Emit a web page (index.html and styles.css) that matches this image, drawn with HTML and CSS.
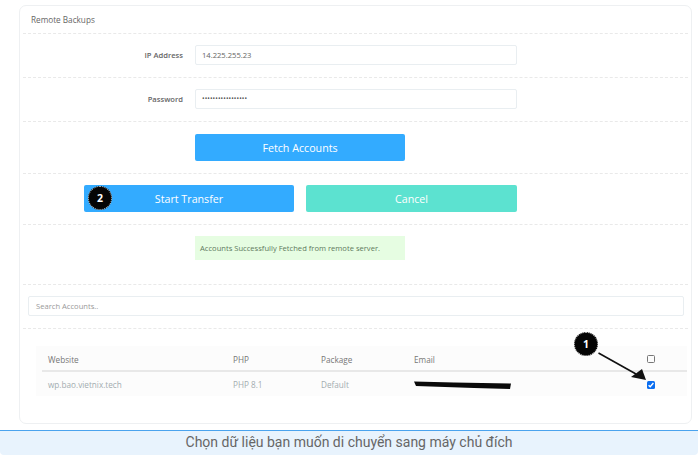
FILE: index.html
```html
<!DOCTYPE html>
<html lang="en">
<head>
  <meta charset="UTF-8" />
  <meta name="viewport" content="width=device-width, initial-scale=1" />
  <title>Remote Backups</title>
  <link rel="stylesheet" href="styles.css">
</head>
<body>
  <div class="card">
    <div class="row title-row">Remote Backups</div>

    <div class="row field-row">
      <label class="field-label">IP Address</label>
      <div class="field-box">14.225.255.23</div>
    </div>

    <div class="row field-row">
      <label class="field-label">Password</label>
      <div class="field-box dots">•••••••••••••••••</div>
    </div>

    <div class="row fetch-row">
      <button class="btn btn-blue btn-half">Fetch Accounts</button>
    </div>

    <div class="row action-row">
      <button class="btn btn-blue btn-half">Start Transfer</button>
      <button class="btn btn-teal btn-cancel">Cancel</button>
      <span class="badge badge-two">2</span>
    </div>

    <div class="row message-row">
      <div class="message">Accounts Successfully Fetched from remote server.</div>
    </div>

    <div class="row search-row">
      <div class="search-box">Search Accounts..</div>
    </div>

    <div class="table-wrap">
      <div class="table-row table-head">
        <span>Website</span>
        <span>PHP</span>
        <span>Package</span>
        <span>Email</span>
        <span class="check"></span>
      </div>
      <div class="table-row table-body">
        <span>wp.bao.vietnix.tech</span>
        <span>PHP 8.1</span>
        <span>Default</span>
        <span class="email-cell">
          <svg class="scribble" width="100" height="10" viewBox="0 0 100 10">
            <path d="M0 0.5 L40 1.5 L97 2.5 L96 8 L60 7 L2 5 Z" fill="#0a0a0a" />
          </svg>
        </span>
        <span class="check checked">
          <svg width="8" height="8" viewBox="0 0 8 8">
            <path d="M1.6 4.2 L3.2 5.8 L6.4 2" fill="none" stroke="#fff" stroke-width="1.4" />
          </svg>
        </span>
      </div>
    </div>

    <span class="badge badge-one">1</span>
    <svg class="arrow" width="50" height="32" viewBox="0 0 50 32">
      <line x1="0.5" y1="3" x2="38" y2="24" stroke="#111" stroke-width="1.6" />
      <path d="M48 30 L33 27 L44 19 Z" fill="#111" />
    </svg>
  </div>

  <div class="caption">Chọn dữ liệu bạn muốn di chuyển sang máy chủ đích</div>
</body>
</html>
```

FILE: styles.css
```css
* {
  box-sizing: border-box;
}

body {
  margin: 0;
  background: #ffffff;
  font-family: 'Open Sans', sans-serif;
  color: #666;
}

.card {
  position: relative;
  width: 673px;
  height: 419px;
  margin: 5px 0 6px 19px;
  border: 1px solid #eef0f2;
  border-radius: 7px;
  padding: 0 3px;
}

.row {
  border-bottom: 1px dashed #e9e9e9;
}

.title-row {
  height: 28px;
  padding: 8px 8px 0;
  font-size: 8.2px;
  color: #666;
}

.field-row {
  display: flex;
  align-items: center;
  height: 44px;
  padding-bottom: 2px;
}

.field-label {
  width: 160px;
  margin-right: 12px;
  text-align: right;
  font-size: 7.6px;
  font-weight: 600;
  color: #666;
}

.field-box {
  width: 322px;
  height: 20px;
  padding: 0 6px;
  border: 1px solid #e9eef1;
  border-radius: 2px;
  font-size: 7.6px;
  line-height: 18px;
  color: #666;
}

.dots {
  font-size: 6.8px;
  letter-spacing: 0.1px;
  color: #555;
}

.btn {
  height: 27px;
  border: none;
  border-radius: 2px;
  color: #fff;
  font-family: 'Open Sans', sans-serif;
  font-size: 10.7px;
}

.btn-blue {
  background: #33abff;
}

.btn-teal {
  background: #5ce2d0;
}

.btn-half {
  width: 210px;
}

.btn-cancel {
  width: 211px;
}

.fetch-row {
  height: 52px;
  padding: 12px 0 0 172px;
}

.action-row {
  position: relative;
  display: flex;
  gap: 12px;
  height: 51px;
  padding: 11px 0 0 61px;
}

.message-row {
  height: 60px;
  padding: 11px 0 0 172px;
}

.message {
  width: 210px;
  height: 24px;
  padding-left: 5px;
  background: #e6fde2;
  font-size: 7.6px;
  line-height: 24px;
  color: #5f7a5d;
  white-space: nowrap;
}

.search-row {
  height: 44px;
  padding: 11px 5px 0;
}

.search-box {
  width: 656px;
  height: 20px;
  padding-left: 7px;
  border: 1px solid #e9eef1;
  border-radius: 2px;
  font-size: 7.6px;
  line-height: 18px;
  color: #999;
}

.table-wrap {
  width: 651px;
  margin: 17px 0 0 13px;
  background: #fcfcfc;
}

.table-row {
  display: grid;
  grid-template-columns: 185px 88px 93px 233px 1fr;
  align-items: center;
  margin-left: 6px;
  padding-left: 6px;
  font-size: 8.2px;
}

.table-head {
  height: 26px;
  padding-top: 2px;
  border-bottom: 2px solid #e8e8e8;
  color: #777;
}

.table-body {
  height: 24px;
  padding-top: 1px;
  color: #a3acb0;
}

.email-cell {
  position: relative;
  height: 10px;
}

.scribble {
  position: absolute;
  left: 0;
  top: 1px;
}

.check {
  display: block;
  width: 8px;
  height: 8px;
  border: 1px solid #777;
  border-radius: 1.5px;
}

.checked {
  border: none;
  background: #0b6ef0;
  line-height: 0;
}

.badge {
  position: absolute;
  width: 24px;
  height: 24px;
  border: 1px dotted #bbb;
  border-radius: 50%;
  background: #050505;
  color: #fff;
  font-size: 10.5px;
  font-weight: 700;
  line-height: 22px;
  text-align: center;
}

.badge-two {
  left: 65px;
  top: 12px;
}

.badge-one {
  left: 554px;
  top: 326px;
}

.arrow {
  position: absolute;
  left: 578px;
  top: 344px;
}

.caption {
  height: 25px;
  border-top: 1px solid #4aa3ee;
  border-radius: 0 0 4px 4px;
  background: #e8f3fd;
  color: #666;
  font-family: 'Roboto', sans-serif;
  font-size: 14px;
  line-height: 23px;
  text-align: center;
}
```
